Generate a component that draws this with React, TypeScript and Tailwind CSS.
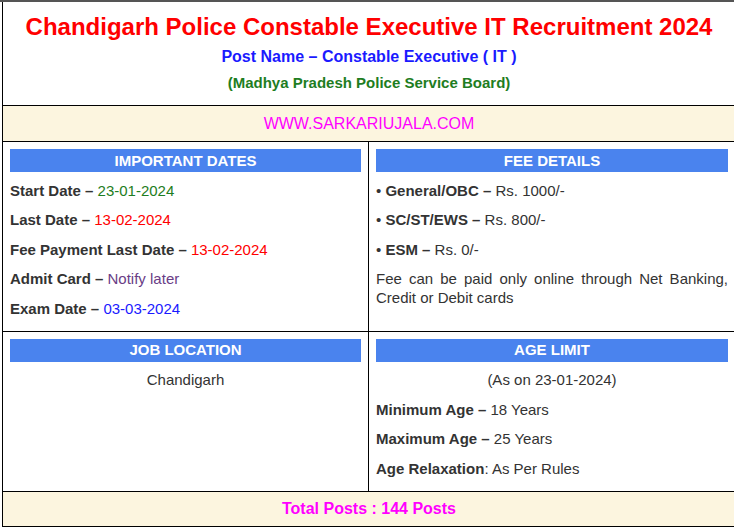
export default function App() {
  const font = { fontFamily: '"Liberation Sans", Arial, sans-serif' };
  return (
    <div className="w-[734px] h-[527px] overflow-hidden bg-white" style={font}>
      <div className="h-[2px] bg-[#555]" />
      <div className="ml-[2px] w-[734px] border-l border-r border-b border-black text-[15px] text-[#333]">
        {/* Header */}
        <div className="border-b border-black text-center pt-[11px] pb-[12px]">
          <h1 className="text-[24px] leading-[28px] font-bold text-[#ff0000]">
            Chandigarh Police Constable Executive IT Recruitment 2024
          </h1>
          <p className="mt-[6px] text-[16px] leading-[20px] font-bold text-[#1a1aff]">
            Post Name – Constable Executive ( IT )
          </p>
          <p className="mt-[6px] text-[15px] leading-[20px] font-bold text-[#1e7d22]">
            (Madhya Pradesh Police Service Board)
          </p>
        </div>

        {/* Website */}
        <div className="h-[36px] border-b border-black bg-[#fcf5df] flex items-center justify-center text-[16px] text-[#ff00ff]">
          WWW.SARKARIUJALA.COM
        </div>

        {/* Dates / Fees */}
        <div className="grid grid-cols-[366px_1fr] border-b border-black">
          <div className="border-r border-black px-[7px] pt-[7px] pb-[13px]">
            <Bar title="IMPORTANT DATES" />
            <div className="mt-[8.5px] flex flex-col gap-[10.5px] leading-[19px]">
              <p><b>Start Date –</b> <span className="text-[#1e7d22]">23-01-2024</span></p>
              <p><b>Last Date –</b> <span className="text-[#ff0000]">13-02-2024</span></p>
              <p><b>Fee Payment Last Date –</b> <span className="text-[#ff0000]">13-02-2024</span></p>
              <p><b>Admit Card –</b> <span className="text-[#6a3d86]">Notify later</span></p>
              <p><b>Exam Date –</b> <span className="text-[#1a1aff]">03-03-2024</span></p>
            </div>
          </div>
          <div className="px-[7px] pt-[7px] pb-[13px]">
            <Bar title="FEE DETAILS" />
            <div className="mt-[8.5px] flex flex-col gap-[10.5px] leading-[19px]">
              <p>• <b>General/OBC –</b> Rs. 1000/-</p>
              <p>• <b>SC/ST/EWS –</b> Rs. 800/-</p>
              <p>• <b>ESM –</b> Rs. 0/-</p>
              <p className="text-justify">
                Fee can be paid only online through Net Banking, Credit or Debit cards
              </p>
            </div>
          </div>
        </div>

        {/* Location / Age */}
        <div className="grid grid-cols-[366px_1fr] border-b border-black">
          <div className="border-r border-black px-[7px] pt-[7px] pb-[13px]">
            <Bar title="JOB LOCATION" />
            <p className="mt-[8.5px] leading-[19px] text-center">Chandigarh</p>
          </div>
          <div className="px-[7px] pt-[7px] pb-[13px]">
            <Bar title="AGE LIMIT" />
            <div className="mt-[8.5px] flex flex-col gap-[10.5px] leading-[19px]">
              <p className="text-center">(As on 23-01-2024)</p>
              <p><b>Minimum Age –</b> 18 Years</p>
              <p><b>Maximum Age –</b> 25 Years</p>
              <p><b>Age Relaxation</b>: As Per Rules</p>
            </div>
          </div>
        </div>

        {/* Total */}
        <div className="h-[34px] bg-[#fcf5df] flex items-center justify-center text-[16px] font-bold text-[#ff00ff]">
          Total Posts : 144 Posts
        </div>
      </div>
    </div>
  );
}

function Bar({ title }: { title: string }) {
  return (
    <div className="h-[23px] pt-px bg-[#4a83ee] flex items-center justify-center text-white font-bold text-[15px]">
      {title}
    </div>
  );
}
